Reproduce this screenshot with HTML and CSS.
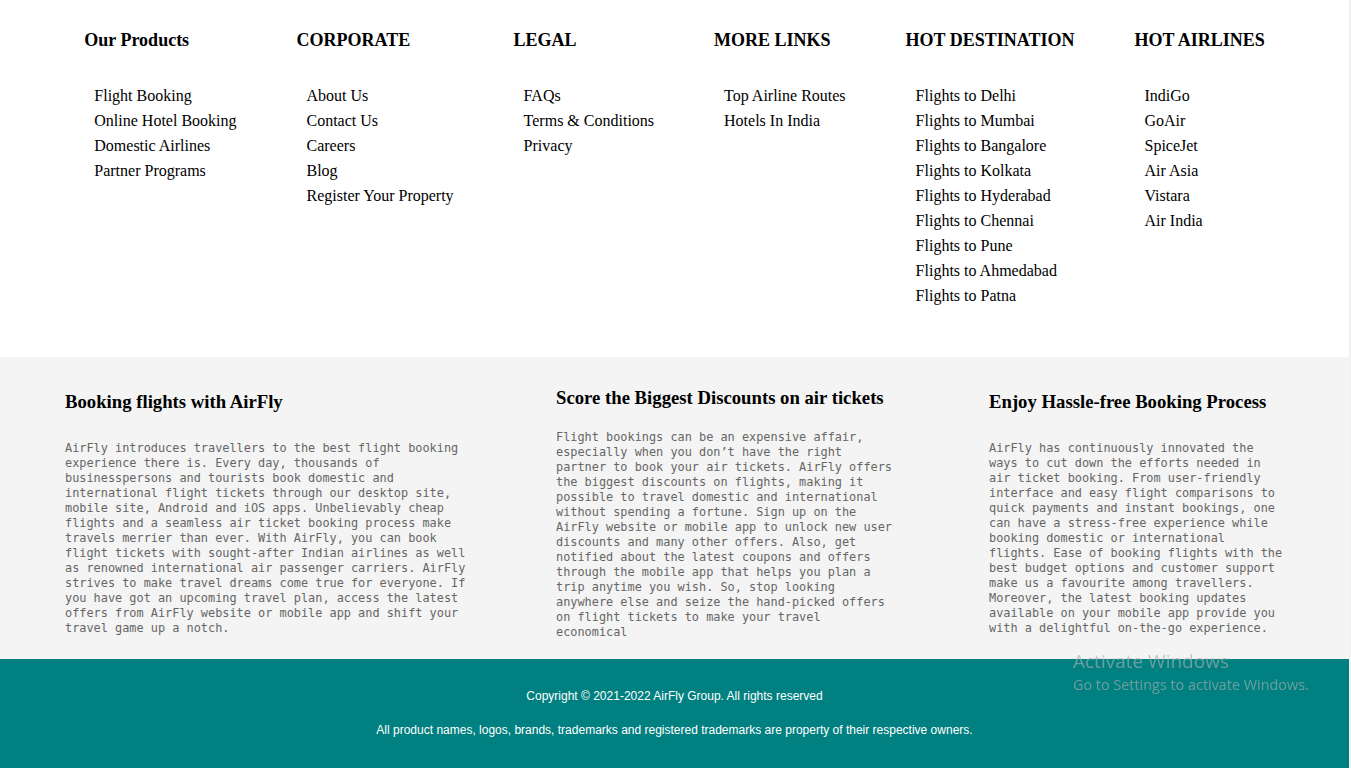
FILE: index.html
```html
<!DOCTYPE html>
<html lang="en">
<head>
<meta charset="utf-8">
<title>AirFly</title>
<link rel="stylesheet" href="styles.css">
</head>
<body>
<div class="page">
  <section class="links">
    <div class="col">
      <h3 class="col-title">Our Products</h3>
      <ul class="col-list">
        <li>Flight Booking</li>
        <li>Online Hotel Booking</li>
        <li>Domestic Airlines</li>
        <li>Partner Programs</li>
      </ul>
    </div>
    <div class="col">
      <h3 class="col-title">CORPORATE</h3>
      <ul class="col-list">
        <li>About Us</li>
        <li>Contact Us</li>
        <li>Careers</li>
        <li>Blog</li>
        <li>Register Your Property</li>
      </ul>
    </div>
    <div class="col">
      <h3 class="col-title">LEGAL</h3>
      <ul class="col-list">
        <li>FAQs</li>
        <li>Terms &amp; Conditions</li>
        <li>Privacy</li>
      </ul>
    </div>
    <div class="col">
      <h3 class="col-title">MORE LINKS</h3>
      <ul class="col-list">
        <li>Top Airline Routes</li>
        <li>Hotels In India</li>
      </ul>
    </div>
    <div class="col">
      <h3 class="col-title">HOT DESTINATION</h3>
      <ul class="col-list">
        <li>Flights to Delhi</li>
        <li>Flights to Mumbai</li>
        <li>Flights to Bangalore</li>
        <li>Flights to Kolkata</li>
        <li>Flights to Hyderabad</li>
        <li>Flights to Chennai</li>
        <li>Flights to Pune</li>
        <li>Flights to Ahmedabad</li>
        <li>Flights to Patna</li>
      </ul>
    </div>
    <div class="col">
      <h3 class="col-title">HOT AIRLINES</h3>
      <ul class="col-list">
        <li>IndiGo</li>
        <li>GoAir</li>
        <li>SpiceJet</li>
        <li>Air Asia</li>
        <li>Vistara</li>
        <li>Air India</li>
      </ul>
    </div>
  </section>

  <section class="info">
    <div class="info-col">
      <h3 class="info-title">Booking flights with AirFly</h3>
      <p class="info-text info-text--wide">AirFly introduces travellers to the best flight booking experience there is. Every day, thousands of businesspersons and tourists book domestic and international flight tickets through our desktop site, mobile site, Android and iOS apps. Unbelievably cheap flights and a seamless air ticket booking process make travels merrier than ever. With AirFly, you can book flight tickets with sought-after Indian airlines as well as renowned international air passenger carriers. AirFly strives to make travel dreams come true for everyone. If you have got an upcoming travel plan, access the latest offers from AirFly website or mobile app and shift your travel game up a notch.</p>
    </div>
    <div class="info-col">
      <h3 class="info-title">Score the Biggest Discounts on air tickets</h3>
      <p class="info-text info-text--mid">Flight bookings can be an expensive affair, especially when you don’t have the right partner to book your air tickets. AirFly offers the biggest discounts on flights, making it possible to travel domestic and international without spending a fortune. Sign up on the AirFly website or mobile app to unlock new user discounts and many other offers. Also, get notified about the latest coupons and offers through the mobile app that helps you plan a trip anytime you wish. So, stop looking anywhere else and seize the hand-picked offers on flight tickets to make your travel economical</p>
    </div>
    <div class="info-col">
      <h3 class="info-title">Enjoy Hassle-free Booking Process</h3>
      <p class="info-text info-text--narrow">AirFly has continuously innovated the ways to cut down the efforts needed in air ticket booking. From user-friendly interface and easy flight comparisons to quick payments and instant bookings, one can have a stress-free experience while booking domestic or international flights. Ease of booking flights with the best budget options and customer support make us a favourite among travellers. Moreover, the latest booking updates available on your mobile app provide you with a delightful on-the-go experience.</p>
    </div>
  </section>

  <footer class="footer">
    <p class="footer-text">Copyright © 2021-2022 AirFly Group. All rights reserved</p>
    <p class="footer-text">All product names, logos, brands, trademarks and registered trademarks are property of their respective owners.</p>
  </footer>
</div>

<div class="watermark">
  <div class="watermark-title">Activate Windows</div>
  <div class="watermark-sub">Go to Settings to activate Windows.</div>
</div>
</body>
</html>
```

FILE: styles.css
```css
html {
  background: #f1f1f1;
}

body {
  margin: 0;
  font-family: "Liberation Serif", "Times New Roman", serif;
  color: #000;
}

.page {
  width: 1349px;
  background: #fff;
}

/* top link columns */
.links {
  display: flex;
  justify-content: center;
  gap: 60px;
  padding: 29px 0 49px;
}

.col-title {
  margin: 0;
  font-size: 18px;
  line-height: 22px;
  font-weight: bold;
}

.col-list {
  list-style: none;
  margin: 32px 0 0;
  padding: 0 0 0 10px;
  font-size: 16px;
  line-height: 25px;
}

/* info section */
.info {
  background: #f4f4f4;
  display: grid;
  grid-template-columns: 491px 433px 1fr;
  align-items: center;
  padding: 30px 0 19px 65px;
}

.info-title {
  margin: 0;
  font-size: 18.72px;
  line-height: 22px;
  font-weight: bold;
  white-space: nowrap;
}

.info-text {
  margin: 28px 0 0;
  font-family: "DejaVu Sans Mono", "Liberation Mono", monospace;
  font-size: 11.88px;
  line-height: 15px;
  color: #666;
}

.info-text--wide {
  width: 57.5ch;
}

.info-text--mid {
  width: 47.5ch;
  margin-top: 21px;
}

.info-text--narrow {
  width: 41.5ch;
}

/* footer */
.footer {
  background: #008080;
  display: flex;
  flex-direction: column;
  align-items: center;
  gap: 20px;
  padding: 30px 0 39px;
}

.footer-text {
  margin: 0;
  font-family: "Liberation Sans", Arial, sans-serif;
  font-size: 12px;
  line-height: 14px;
  color: #fff;
}

/* OS watermark overlay */
.watermark {
  position: fixed;
  left: 1073px;
  top: 649px;
  font-family: "Open Sans", "Noto Sans", sans-serif;
  color: rgba(174, 174, 174, 0.63);
}

.watermark-title {
  font-size: 19px;
  line-height: 25px;
}

.watermark-sub {
  font-size: 14.4px;
  line-height: 21px;
}
```
